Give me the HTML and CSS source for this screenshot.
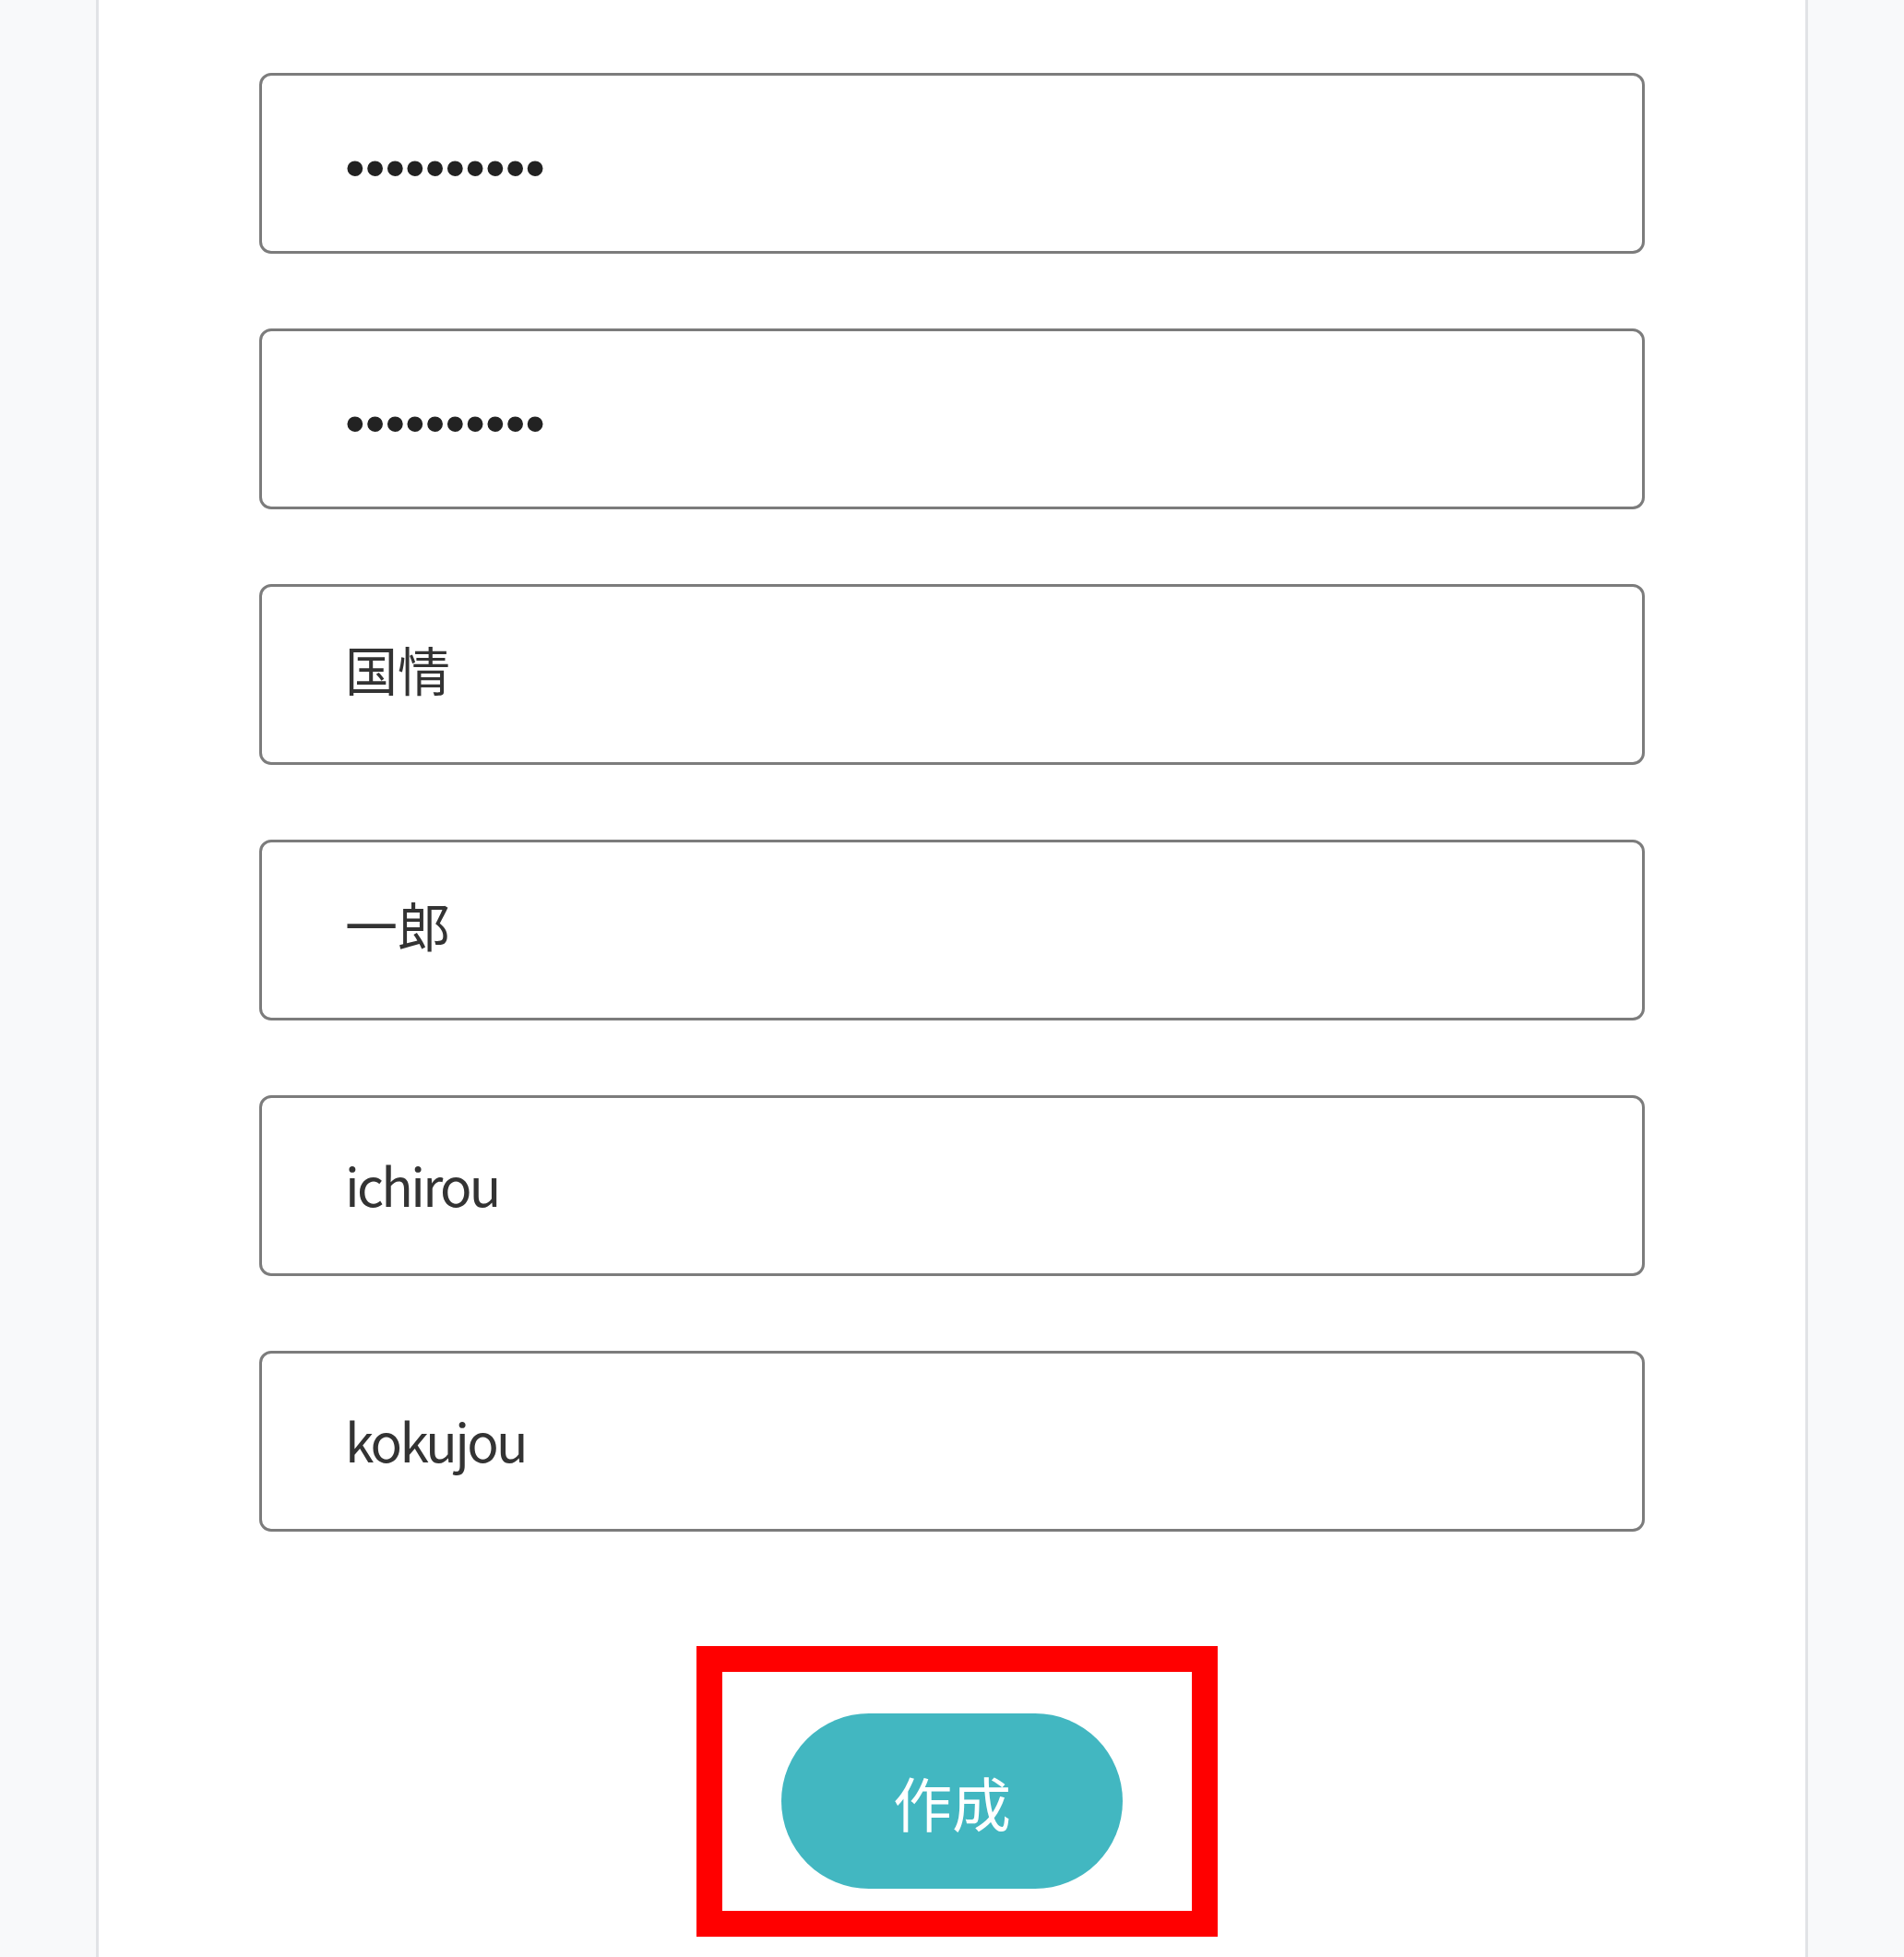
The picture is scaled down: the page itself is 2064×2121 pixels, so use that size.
FILE: index.html
```html
<!DOCTYPE html>
<html lang="ja">
<head>
    <meta charset="UTF-8">
    <meta name="viewport" content="width=device-width, initial-scale=1.0">
    <title>ユーザー作成</title>
    <link rel="stylesheet" href="styles.css">
</head>
<body>
    <div class="card">
        <form class="signup" onsubmit="return false;">
            <div class="fields">
                <input class="field field-secret" type="password" name="password" value="kokujou123">
                <input class="field field-secret" type="password" name="password_confirm" value="kokujou123">
                <input class="field field-kanji" type="text" name="last_name" value="国情">
                <input class="field field-kanji" type="text" name="first_name" value="一郎">
                <input class="field field-latin" type="text" name="first_name_kana" value="ichirou">
                <input class="field field-latin" type="text" name="last_name_kana" value="kokujou">
            </div>
            <div class="submit-row">
                <div class="highlight">
                    <button type="submit" class="btn-create">作成</button>
                </div>
            </div>
        </form>
    </div>
</body>
</html>
```

FILE: styles.css
```css
* {
    margin: 0;
    padding: 0;
    box-sizing: border-box;
}
html, body {
    width: 100%;
    min-height: 100%;
    background: #f8f9fa;
    font-family: "Noto Sans CJK JP", "Noto Sans", sans-serif;
    color: #333333;
}
.card {
    width: 1856px;
    min-height: 100vh;
    margin: 0 auto;
    background: #ffffff;
    border-left: 3px solid #e1e3e6;
    border-right: 3px solid #e1e3e6;
    padding: 79px 174px 21px;
}
.fields {
    display: flex;
    flex-direction: column;
    gap: 81px;
}
.field {
    display: block;
    width: 100%;
    height: 196px;
    padding: 0 90px;
    border: 3px solid #7c7c7c;
    border-radius: 13px;
    background: #ffffff;
    font-family: "Noto Sans CJK JP", "Noto Sans", sans-serif;
    font-size: 57px;
    color: #333333;
    outline: none;
}
.field-secret {
    font-family: "Liberation Sans", Arial, sans-serif;
    font-size: 62px;
    color: #222222;
    padding-top: 8px;
}
.field-kanji {
    padding-bottom: 14px;
}
.field-latin {
    letter-spacing: -2.7px;
    padding-bottom: 5px;
}
.submit-row {
    display: flex;
    justify-content: center;
    padding-left: 11px;
    margin-top: 124px;
}
.highlight {
    border: 28px solid #ff0000;
    padding: 45px 75px 24px 64px;
}
.btn-create {
    display: block;
    width: 370px;
    height: 190px;
    border: none;
    border-radius: 95px;
    background: #42b7c1;
    color: #ffffff;
    font-family: "Noto Sans CJK JP", sans-serif;
    font-size: 64px;
    cursor: pointer;
}
```
